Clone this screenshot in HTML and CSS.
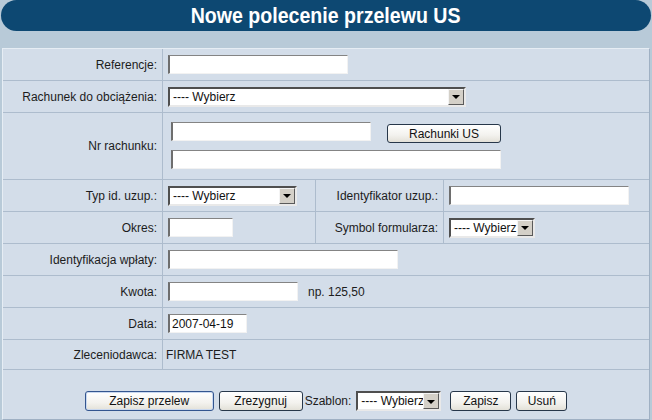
FILE: index.html
```html
<!DOCTYPE html>
<html lang="pl">
<head>
<meta charset="utf-8">
<title>Nowe polecenie przelewu US</title>
<link rel="stylesheet" href="styles.css">
</head>
<body>
<div class="page">
  <div class="title"><span class="title-text">Nowe polecenie przelewu US</span></div>
  <div class="panel">
    <div class="form">
      <div class="lbl">Referencje:</div>
      <div class="val span3"><input class="in w180" type="text"></div>

      <div class="lbl">Rachunek do obciążenia:</div>
      <div class="val span3"><div class="sel w298"><span class="sel-val">---- Wybierz</span><span class="sel-btn"><span class="tri"></span></span></div></div>

      <div class="lbl">Nr rachunku:</div>
      <div class="val span3 nr">
        <div class="nr-line"><input class="in w200" type="text"><button class="btn w114 shift" type="button">Rachunki US</button></div>
        <div class="nr-line"><input class="in w330" type="text"></div>
      </div>

      <div class="lbl">Typ id. uzup.:</div>
      <div class="val"><div class="sel w129"><span class="sel-val">---- Wybierz</span><span class="sel-btn"><span class="tri"></span></span></div></div>
      <div class="lbl">Identyfikator uzup.:</div>
      <div class="val last"><input class="in w180" type="text"></div>

      <div class="lbl">Okres:</div>
      <div class="val"><input class="in w65" type="text"></div>
      <div class="lbl">Symbol formularza:</div>
      <div class="val last"><div class="sel w86"><span class="sel-val">---- Wybierz</span><span class="sel-btn"><span class="tri"></span></span></div></div>

      <div class="lbl">Identyfikacja wpłaty:</div>
      <div class="val span3"><input class="in w230" type="text"></div>

      <div class="lbl">Kwota:</div>
      <div class="val span3"><input class="in w130" type="text"><span class="hint">np. 125,50</span></div>

      <div class="lbl">Data:</div>
      <div class="val span3"><input class="in w79" type="text" value="2007-04-19"></div>

      <div class="lbl">Zleceniodawca:</div>
      <div class="val span3 txt">FIRMA TEST</div>

      <div class="actions">
        <button class="btn w129 primary" type="button">Zapisz przelew</button>
        <button class="btn w84" type="button">Zrezygnuj</button>
        <span class="szablon">Szablon:</span>
        <div class="sel w85"><span class="sel-val">---- Wybierz</span><span class="sel-btn"><span class="tri"></span></span></div>
        <button class="btn w61 gapl" type="button">Zapisz</button>
        <button class="btn w51" type="button">Usuń</button>
      </div>
    </div>
  </div>
</div>
</body>
</html>
```
FILE: styles.css
```css
html, body {
  margin: 0;
  padding: 0;
}
body {
  background: #b8cad8;
  font-family: "Liberation Sans", Arial, sans-serif;
  font-size: 12px;
  color: #1c1c1c;
}
.page {
  width: 652px;
  height: 420px;
  overflow: hidden;
}
.title {
  height: 31px;
  margin: 0 1px;
  border-radius: 16px;
  background: #0d4872;
  color: #ffffff;
  text-align: center;
  font-family: "Liberation Sans", Arial, sans-serif;
  font-weight: bold;
  font-size: 22px;
  line-height: 31px;
}
.title-text {
  display: inline-block;
  transform: scaleX(0.89);
  transform-origin: center;
}
.panel {
  margin: 17px 0 0 2px;
  width: 648px;
  box-sizing: border-box;
  border: 1px solid;
  border-color: #e6edf4 #9fb0c3 #9fb0c3 #e6edf4;
  background: #d3dde9;
}
.form {
  display: grid;
  grid-template-columns: 160px 153px 128px 1fr;
  grid-template-rows: 32px 32px 67px 32px 32px 32px 32px 32px 30px 49px;
}
.lbl, .val {
  box-sizing: border-box;
  border-bottom: 1px solid #adbccd;
  border-right: 1px solid #adbccd;
  display: flex;
  align-items: center;
}
.lbl {
  justify-content: flex-end;
  padding-right: 5px;
  white-space: nowrap;
}
.val {
  padding-left: 5px;
}
.val.last, .val.span3 {
  border-right: none;
}
.span3 {
  grid-column: 2 / 5;
}
.txt {
  padding-left: 3px;
}
.nr {
  flex-direction: column;
  align-items: flex-start;
  justify-content: flex-start;
  padding-left: 8px;
  padding-top: 9px;
  gap: 7px;
}
.nr-line {
  display: flex;
  align-items: flex-start;
}
.in {
  box-sizing: border-box;
  height: 19px;
  margin: 0;
  padding: 0 2px;
  border-style: solid;
  border-width: 1px 1px 1px 2px;
  border-color: #848484 #f2f2f2 #f2f2f2 #6e6e6e;
  background: #ffffff;
  font-family: "Liberation Sans", Arial, sans-serif;
  font-size: 12px;
  color: #111;
  outline: none;
}
.w65 { width: 65px; }
.w79 { width: 79px; }
.w130 { width: 130px; }
.w180 { width: 180px; }
.w200 { width: 200px; }
.w230 { width: 230px; }
.w330 { width: 330px; }
.hint {
  margin-left: 10px;
}
.sel {
  box-sizing: border-box;
  height: 20px;
  display: flex;
  align-items: stretch;
  border-style: solid;
  border-width: 2px;
  border-color: #4f4f4f #e9e9e9 #e9e9e9 #4f4f4f;
  background: #ffffff;
  overflow: hidden;
}
.w86 { width: 86px; }
.w85 { width: 85px; }
.w129 { width: 129px; }
.w298 { width: 298px; }
.sel-val {
  flex: 1;
  min-width: 0;
  padding-left: 3px;
  line-height: 16px;
  white-space: nowrap;
  overflow: hidden;
  color: #111;
}
.sel-btn {
  box-sizing: border-box;
  width: 16px;
  flex: none;
  background: #d4d0c8;
  border: 1px solid;
  border-color: #f4f4f4 #5a5a5a #5a5a5a #f4f4f4;
  display: flex;
  align-items: center;
  justify-content: center;
}
.tri {
  width: 0;
  height: 0;
  border-left: 4px solid transparent;
  border-right: 4px solid transparent;
  border-top: 4px solid #000;
  margin-top: 1px;
}
.btn {
  box-sizing: border-box;
  height: 19px;
  margin: 0;
  padding: 0;
  border: 1px solid #27374a;
  border-radius: 3px;
  background: linear-gradient(#ffffff, #f3f2ee 60%, #e3e1d8);
  font-family: "Liberation Sans", Arial, sans-serif;
  font-size: 12px;
  color: #111;
  line-height: 16px;
}
.btn.primary {
  border-color: #33558f;
  box-shadow: inset 0 0 0 1px #c9d8ef;
}
.shift {
  margin-left: 16px;
  margin-top: 2px;
}
.w114 { width: 114px; }
.w129.btn { width: 129px; height: 20px; }
.w84 { width: 84px; }
.w61 { width: 61px; }
.w51 { width: 51px; }
.actions {
  grid-column: 1 / 5;
  display: flex;
  justify-content: center;
  align-items: flex-start;
  padding-top: 21px;
  gap: 5px;
  box-sizing: border-box;
}
.actions .btn {
  height: 20px;
}
.szablon {
  margin-left: -3px;
  line-height: 20px;
}
.actions .sel {
  height: 20px;
}
.gapl {
  margin-left: 4px;
}
```
